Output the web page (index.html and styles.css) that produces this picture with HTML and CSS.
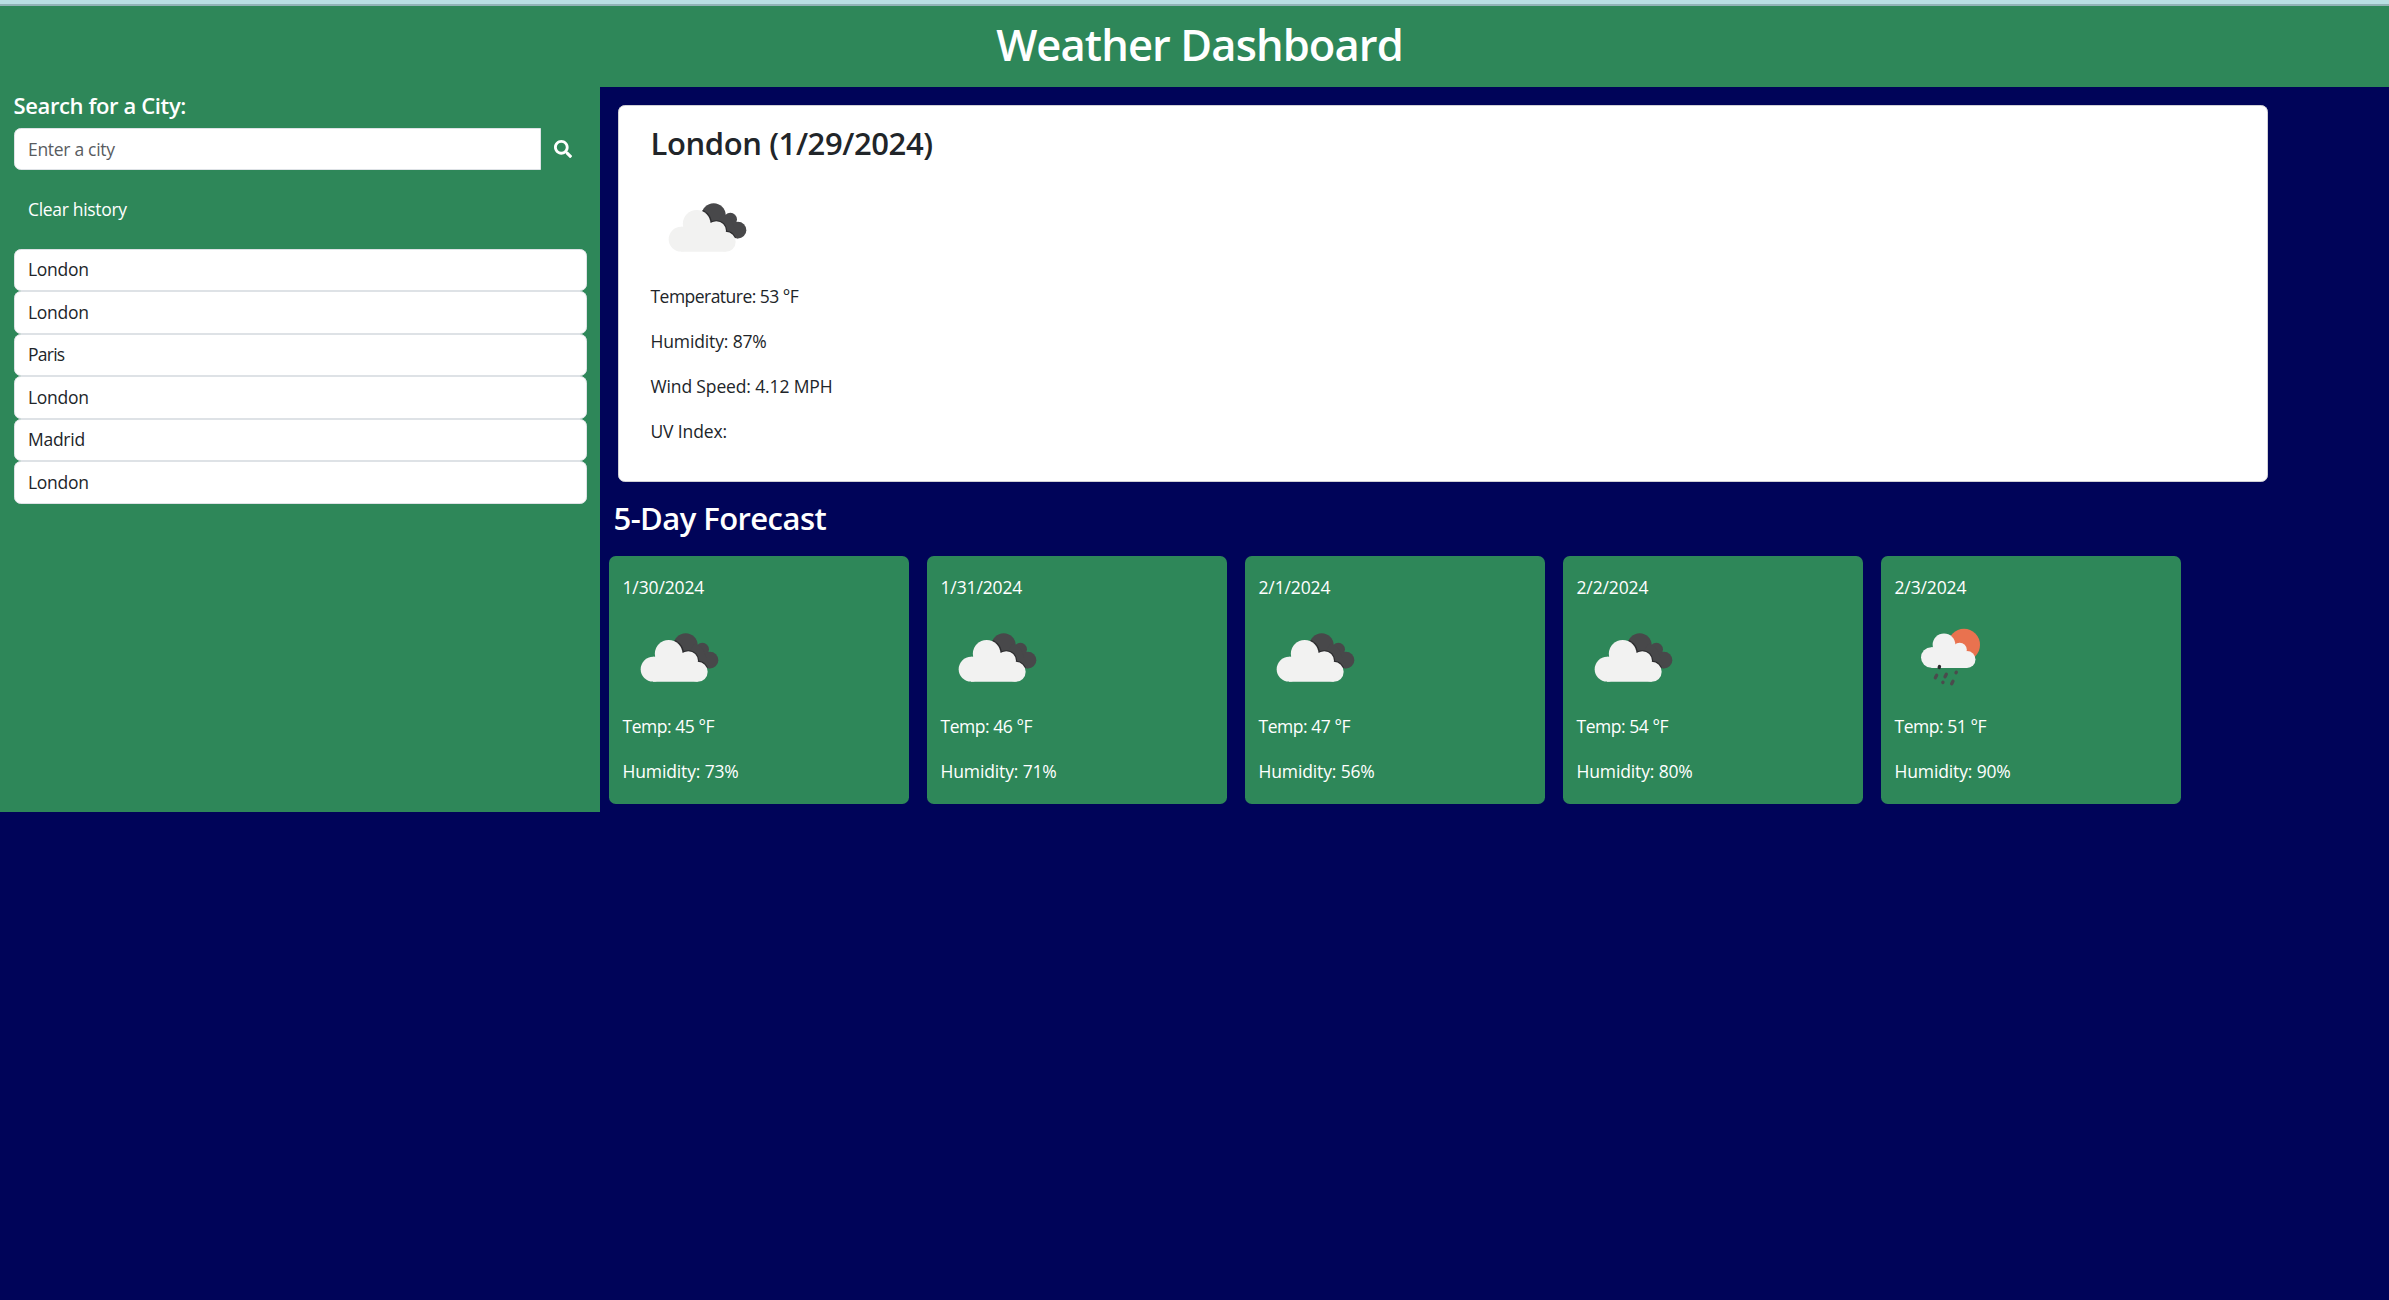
FILE: index.html
```html
<!DOCTYPE html>
<html lang="en">
<head>
<meta charset="utf-8">
<title>Weather Dashboard</title>
<link rel="stylesheet" href="styles.css">
</head>
<body>
<svg width="0" height="0" class="sprites" aria-hidden="true">
  <defs>
    <clipPath id="dark-cloud"><circle cx="197" cy="107" r="36"/><circle cx="247" cy="120" r="20"/><circle cx="270" cy="152" r="25"/><path d="M197 143L225 100L250 120L270 177L240 170Z"/></clipPath>
  </defs>
  <symbol id="clouds" viewBox="9 -25.5 337.5 337.5">
    <g fill="#48484a"><circle cx="197" cy="107" r="36"/><circle cx="247" cy="120" r="20"/><circle cx="270" cy="152" r="25"/><path d="M197 143L225 100L250 120L270 177L240 170Z"/></g>
    <g fill="#2c2c2e" clip-path="url(#dark-cloud)"><circle cx="147" cy="133" r="45"/><circle cx="205" cy="154" r="32"/><circle cx="233" cy="187" r="33"/></g>
    <g fill="#f2f2f1"><circle cx="146" cy="133" r="41.5"/><circle cx="99" cy="179" r="37"/><circle cx="205" cy="154" r="29"/><circle cx="233" cy="187" r="30"/><path d="M99 142h106l28 45v30H99z M146 130h59v30h-59z"/></g>
  </symbol>
  <symbol id="rain" viewBox="15 -25.5 337.5 337.5">
    <circle cx="222" cy="106" r="48" fill="#e9724f"/>
    <g fill="#f2f2f2"><circle cx="162" cy="106" r="34"/><circle cx="124" cy="144" r="31"/><circle cx="209" cy="121" r="21.500"/><circle cx="231" cy="150" r="25.5"/><path d="M124 113h85l22 37v25.500H124z M162 110h47v30h-47z"/></g>
    <g fill="none" stroke="#4b4b4d" stroke-width="10" stroke-linecap="round"><path d="M140 197l-4 8M169 194l-4 8M199 188l-1 2M159 218l-.5 1M189 215l-4 8"/><path stroke="#2c2c2e" d="M148.500 171l-1 3"/></g>
  </symbol>
</svg>

<header class="header"><h1>Weather Dashboard</h1></header>

<div class="layout">
  <aside class="sidebar">
    <h2 class="search-title">Search for a City:</h2>
    <div class="search">
      <input class="field search-input" type="text" placeholder="Enter a city" aria-label="City">
      <button class="search-button" type="button" aria-label="Search"><svg viewBox="0 0 512 512" width="18" height="18"><path fill="currentColor" d="M505 442.700L405.300 343c-4.500-4.500-10.600-7-17-7H372c27.600-35.300 44-79.700 44-128C416 93.100 322.900 0 208 0S0 93.100 0 208s93.100 208 208 208c48.300 0 92.700-16.400 128-44v16.300c0 6.400 2.500 12.500 7 17l99.700 99.700c9.400 9.400 24.600 9.400 33.900 0l28.300-28.300c9.400-9.400 9.400-24.600.1-34zM208 336c-70.700 0-128-57.200-128-128 0-70.700 57.200-128 128-128 70.700 0 128 57.200 128 128 0 70.700-57.200 128-128 128z"/></svg></button>
    </div>
    <button class="clear" type="button">Clear history</button>
    <div class="history">
      <div class="field">London</div>
      <div class="field">London</div>
      <div class="field narrow">Paris</div>
      <div class="field">London</div>
      <div class="field">Madrid</div>
      <div class="field">London</div>
    </div>
  </aside>

  <main class="content">
    <section class="today">
      <h3>London (1/29/2024)</h3>
      <svg class="icon"><use href="#clouds"/></svg>
      <p class="temp">Temperature: 53 °F</p>
      <p>Humidity: 87%</p>
      <p>Wind Speed: 4.12 MPH</p>
      <p>UV Index:</p>
    </section>
    <h3 class="forecast-title">5-Day Forecast</h3>
    <section class="forecast">
      <article class="day"><p class="date">1/30/2024</p><svg class="icon"><use href="#clouds"/></svg><p class="temp">Temp: 45 °F</p><p>Humidity: 73%</p></article>
      <article class="day"><p class="date">1/31/2024</p><svg class="icon"><use href="#clouds"/></svg><p class="temp">Temp: 46 °F</p><p>Humidity: 71%</p></article>
      <article class="day"><p class="date">2/1/2024</p><svg class="icon"><use href="#clouds"/></svg><p class="temp">Temp: 47 °F</p><p>Humidity: 56%</p></article>
      <article class="day"><p class="date">2/2/2024</p><svg class="icon"><use href="#clouds"/></svg><p class="temp">Temp: 54 °F</p><p>Humidity: 80%</p></article>
      <article class="day"><p class="date">2/3/2024</p><svg class="icon"><use href="#rain"/></svg><p class="temp">Temp: 51 °F</p><p>Humidity: 90%</p></article>
    </section>
  </main>
</div>
</body>
</html>
```
FILE: styles.css
```css
* { box-sizing: border-box; }

body {
  margin: 0;
  min-height: 100vh;
  background: #000459;
  color: #212529;
  font: 400 17.5px/27px "Open Sans", "Noto Sans", sans-serif;
  letter-spacing: -0.14px;
}

h1, h2, h3, p { margin: 0; }

.sprites { position: absolute; }

.header {
  height: 87px;
  border-top: 4px solid #b8dfe2;
  box-shadow: inset 0 2px #90b3b6;
  background: #2e8759;
  color: #fff;
  text-align: center;
  padding-top: 13.5px;
  padding-left: 10px;
}

.header h1 {
  font-size: 43.5px;
  font-weight: 600;
  line-height: 54px;
  letter-spacing: -0.9px;
}

.layout { display: flex; align-items: stretch; }

.sidebar {
  width: 600px;
  height: 725px;
  padding: 5px 13.5px 0;
  background: #2e8759;
  color: #fff;
}

.search-title {
  font-size: 22px;
  font-weight: 600;
  line-height: 27px;
  letter-spacing: -0.38px;
  margin-bottom: 9px;
}

.search { display: flex; height: 42px; }

.field {
  height: 42.5px;
  padding: 6.5px 13.5px;
  border: 1px solid #dee2e6;
  border-radius: 6.75px;
  background: #fff;
  color: #212529;
  letter-spacing: -0.27px;
}

.narrow { letter-spacing: -0.75px; }

.search-input {
  width: 527.5px;
  height: 42px;
  padding: 6px 13.5px 7px;
  font: inherit;
  letter-spacing: -0.3px;
  border-radius: 6.75px 0 0 6.75px;
}

.search-input::placeholder { color: #595c5f; opacity: 1; }

.search-button {
  padding: 0 12.5px;
  border: 0;
  background: none;
  color: #fff;
}

.search-button svg { display: block; }

.clear {
  display: block;
  height: 42px;
  margin: 18.5px 0 18px;
  padding: 0 14.5px;
  border: 0;
  background: none;
  color: #fff;
  font: inherit;
  letter-spacing: -0.32px;
}

.history { margin-right: -0.5px; }

.content { flex: 1; padding: 18px 0 0 9px; }

.today {
  width: 1650px;
  height: 377px;
  margin-left: 9px;
  padding: 17.5px 31.5px 0;
  border: 1px solid #d0d0d5;
  border-radius: 6.75px;
  background: #fff;
}

.today h3 {
  font-size: 31px;
  font-weight: 600;
  line-height: 38px;
  letter-spacing: -0.4px;
  margin-bottom: 9.5px;
}

.icon { display: block; width: 112.5px; height: 112.5px; }

.today .icon { margin-bottom: -1px; }

.today p { margin-bottom: 18px; }

.today .temp { letter-spacing: -0.53px; }

.forecast-title {
  margin: 17px 0 19px 4.5px;
  color: #fff;
  font-size: 31px;
  font-weight: 600;
  line-height: 38px;
  letter-spacing: -0.56px;
}

.forecast { display: flex; gap: 18px; }

.day {
  width: 300px;
  height: 247.5px;
  padding: 17.5px 13.5px 0;
  border-radius: 6.75px;
  background: #2e8759;
  color: #fff;
}

.day .temp { margin-bottom: 18px; letter-spacing: -0.45px; }
```
